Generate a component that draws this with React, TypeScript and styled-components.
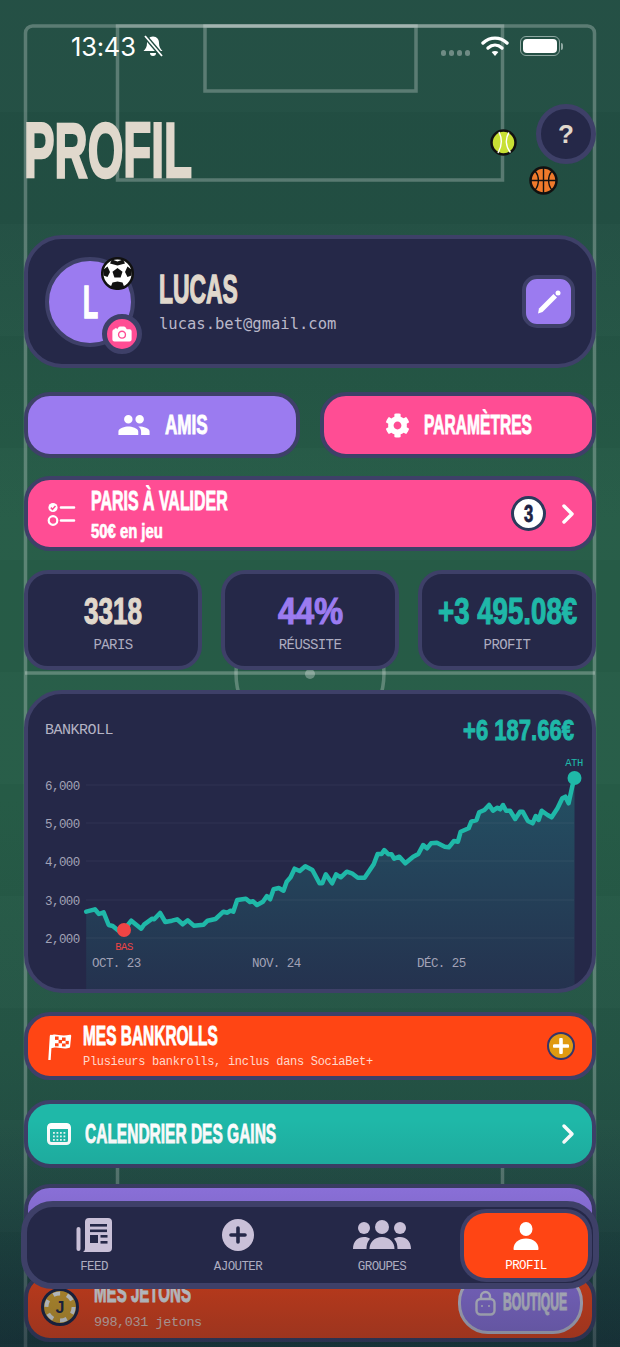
import React, { useLayoutEffect, useRef } from "react";
import styled, { createGlobalStyle } from "styled-components";
import { ChevronRight } from "lucide-react";
import { MdPeople } from "react-icons/md";
import { FaCog } from "react-icons/fa";
import { IoCamera } from "react-icons/io5";

const navy = "#252848";
const edge = "#3e4068";
const cream = "#e0d8cc";
const purple = "#9b7bf0";
const pink = "#ff4d94";
const orange = "#ff4514";
const teal = "#1fb8a8";
const mono = `"Liberation Mono", "DejaVu Sans Mono", monospace`;
const display = `"Liberation Sans Narrow", "Liberation Sans", sans-serif`;

const Global = createGlobalStyle`
  html, body { margin: 0; padding: 0; background: #214c42; }
  * { box-sizing: border-box; }
`;

const Page = styled.div`
  position: relative;
  width: 620px;
  height: 1347px;
  overflow: hidden;
  padding: 33px 24px 0;
  background:
    repeating-linear-gradient(180deg, rgba(255,255,255,.012) 0 112px, rgba(0,0,0,.012) 112px 224px),
    linear-gradient(180deg, #224e43 0, #224f43 220px, #265c47 520px, #265c47 800px, #245445 1050px, #204c43 1200px, #1a3f3e 1347px);
`;
const FieldLines = styled.svg`
  position: absolute;
  left: 0;
  top: 0;
`;
const Content = styled.div`
  position: relative;
  display: flex;
  flex-direction: column;
`;

/* text drawn in the condensed display face, fitted to a measured width */
const DisplayBox = styled.span<{ $w: number; $h: number }>`
  display: block;
  flex: none;
  width: ${(p) => p.$w}px;
  height: ${(p) => p.$h}px;
`;
const DisplayInner = styled.span<{ $size: number; $color: string; $stroke: number }>`
  display: inline-block;
  font-family: ${display};
  font-weight: 700;
  font-size: ${(p) => p.$size}px;
  line-height: ${(p) => p.$size}px;
  color: ${(p) => p.$color};
  -webkit-text-stroke: ${(p) => p.$stroke}px ${(p) => p.$color};
  white-space: nowrap;
  transform-origin: left top;
`;
function Fit({ w, size, color = "#fff", stroke = 0.9, children }: { w: number; size: number; color?: string; stroke?: number; children: React.ReactNode }) {
  const ref = useRef<HTMLSpanElement>(null);
  useLayoutEffect(() => {
    const el = ref.current;
    if (el) el.style.transform = `scaleX(${w / el.offsetWidth})`;
  }, [w]);
  return (
    <DisplayBox $w={w} $h={size}>
      <DisplayInner ref={ref} $size={size} $color={color} $stroke={stroke}>{children}</DisplayInner>
    </DisplayBox>
  );
}

const StatusBar = styled.div`
  display: flex;
  align-items: center;
  height: 26px;
  padding: 0 36px 0 47px;
  color: #fff;
`;
const Clock = styled.span`
  font-family: "Inter", "Liberation Sans", sans-serif;
  font-size: 25.5px;
  font-weight: 400;
  letter-spacing: -0.2px;
  margin-right: 6px;
`;
const StatusRight = styled.div`
  margin-left: auto;
  display: flex;
  align-items: center;
  gap: 11px;
`;
const Dots = styled.div`
  display: flex;
  gap: 2.5px;
  margin-top: 14px;
`;
const Dot = styled.i`
  width: 5.5px;
  height: 5.5px;
  border-radius: 50%;
  background: #6f8b84;
`;
const Battery = styled.div`
  position: relative;
  width: 40px;
  height: 20px;
  border: 1px solid #8fa8a2;
  border-radius: 6px;
  padding: 2px;
  &::before {
    content: "";
    display: block;
    height: 100%;
    border-radius: 4px;
    background: #fff;
  }
  &::after {
    content: "";
    position: absolute;
    right: -4px;
    top: 6px;
    width: 2px;
    height: 7px;
    border-radius: 0 2px 2px 0;
    background: #8fa8a2;
  }
`;

const TitleRow = styled.div`
  position: relative;
  display: flex;
  justify-content: space-between;
  height: 131px;
  margin-top: 45px;
`;
const TitleWrap = styled.div`
  padding-top: 7px;
`;
const HelpButton = styled.div`
  width: 60px;
  height: 60px;
  border-radius: 50%;
  background: ${navy};
  border: 5px solid ${edge};
  display: flex;
  align-items: center;
  justify-content: center;
  color: ${cream};
  font-family: "Liberation Sans", sans-serif;
  font-weight: 700;
  font-size: 26px;
`;
const Ball = styled.svg<{ $x: number; $y: number }>`
  position: absolute;
  left: ${(p) => p.$x}px;
  top: ${(p) => p.$y}px;
`;

const ProfileCard = styled.div`
  height: 133px;
  border-radius: 38px;
  background: ${navy};
  border: 4px solid ${edge};
  display: flex;
  align-items: center;
  padding: 0 17px;
`;
const Avatar = styled.div`
  position: relative;
  flex: none;
  width: 90px;
  height: 90px;
  border-radius: 50%;
  background: ${purple};
  border: 4px solid ${edge};
  display: flex;
  align-items: center;
  justify-content: center;
  margin-right: 24px;
`;
const CameraBadge = styled.div`
  position: absolute;
  left: 53px;
  top: 53px;
  width: 40px;
  height: 40px;
  border-radius: 50%;
  background: ${pink};
  border: 5px solid ${edge};
  display: flex;
  align-items: center;
  justify-content: center;
  color: #fff;
`;
const ProfileText = styled.div`
  flex: 1;
  display: flex;
  flex-direction: column;
  gap: 6px;
  margin-top: -2px;
`;
const Email = styled.div`
  font-family: "DejaVu Sans Mono", monospace;
  font-size: 15.5px;
  color: #b9b7c9;
`;
const EditButton = styled.div`
  width: 53px;
  height: 53px;
  border-radius: 15px;
  background: ${purple};
  border: 4px solid ${edge};
  display: flex;
  align-items: center;
  justify-content: center;
`;

const ActionRow = styled.div`
  display: grid;
  grid-template-columns: 276px 276px;
  gap: 20px;
  margin-top: 24px;
`;
const ActionButton = styled.div<{ $bg: string }>`
  height: 66px;
  border-radius: 26px;
  background: ${(p) => p.$bg};
  border: 4px solid ${edge};
  display: flex;
  align-items: center;
  justify-content: center;
  gap: 14px;
  color: #fff;
`;
const WideCard = styled.div<{ $bg: string; $h: number; $mt: number }>`
  height: ${(p) => p.$h}px;
  margin-top: ${(p) => p.$mt}px;
  border-radius: 26px;
  background: ${(p) => p.$bg};
  border: 4px solid ${edge};
  display: flex;
  align-items: center;
  padding: 0 8px 0 19px;
  color: #fff;
  flex: none;
`;
const CardIcon = styled.div<{ $w: number }>`
  flex: none;
  width: ${(p) => p.$w}px;
  display: flex;
`;
const CardText = styled.div<{ $gap: number; $mt: number }>`
  flex: 1;
  display: flex;
  flex-direction: column;
  gap: ${(p) => p.$gap}px;
  margin-top: ${(p) => p.$mt}px;
`;
const Badge = styled.div`
  width: 35px;
  height: 35px;
  border-radius: 50%;
  background: #fff;
  border: 3px solid #2c3a5c;
  display: flex;
  align-items: center;
  justify-content: center;
  margin-right: 6px;
`;
const CardSub = styled.div`
  font-family: ${mono};
  font-size: 12px;
  letter-spacing: -0.3px;
  color: #ffd9cc;
`;
const PlusBall = styled.div`
  width: 28px;
  height: 28px;
  border-radius: 50%;
  background: #e09a10;
  border: 2.5px solid #34356a;
  display: flex;
  align-items: center;
  justify-content: center;
  margin-right: 9px;
`;

const StatRow = styled.div`
  display: grid;
  grid-template-columns: repeat(3, 178px);
  justify-content: space-between;
  margin-top: 19px;
`;
const StatCard = styled.div`
  height: 100px;
  border-radius: 24px;
  background: ${navy};
  border: 4px solid ${edge};
  display: flex;
  flex-direction: column;
  align-items: center;
  padding-top: 20px;
`;
const StatLabel = styled.div`
  font-family: ${mono};
  font-size: 14px;
  letter-spacing: -0.6px;
  color: #aeadc0;
  margin-top: 7px;
`;

const ChartCard = styled.div`
  height: 303px;
  margin-top: 20px;
  border-radius: 38px;
  background: ${navy};
  border: 4px solid ${edge};
  overflow: hidden;
  flex: none;
`;
const ChartHead = styled.div`
  height: 56px;
  display: flex;
  justify-content: space-between;
  align-items: flex-start;
  padding: 21px 18px 0 17px;
`;
const ChartTitle = styled.div`
  font-family: ${mono};
  font-size: 15px;
  letter-spacing: -0.5px;
  color: #b4b3c4;
  margin-top: 7px;
`;
const ChartSvg = styled.svg`
  display: block;
`;
const AxisText = styled.text`
  font-family: ${mono};
  font-size: 12.5px;
  letter-spacing: -0.55px;
  fill: #a2a2b6;
`;
const MarkText = styled.text<{ $c: string }>`
  font-family: ${mono};
  font-size: 10.5px;
  letter-spacing: -0.5px;
  fill: ${(p) => p.$c};
  text-anchor: middle;
`;

const Spacer = styled.div``;
const JetonCard = styled(WideCard)`
  padding: 0 9px 0 13px;
  gap: 15px;
`;
const JetonText = styled.div`
  flex: 1;
  display: flex;
  flex-direction: column;
  gap: 8px;
  margin-top: -5px;
`;
const JetonSub = styled.div`
  font-family: ${mono};
  font-size: 13.5px;
  letter-spacing: -0.4px;
  color: #ffd9cc;
`;
const Boutique = styled.div`
  width: 125px;
  height: 62px;
  margin-top: -9px;
  border-radius: 30px;
  background: ${purple};
  border: 3px solid #d9d6e8;
  display: flex;
  align-items: center;
  justify-content: center;
  gap: 7px;
`;

const Fade = styled.div`
  position: absolute;
  left: 0;
  right: 0;
  top: 1120px;
  bottom: 0;
  background: linear-gradient(180deg, rgba(18,30,45,0), rgba(18,30,45,.43));
  pointer-events: none;
`;
const Nav = styled.div`
  position: absolute;
  left: 21px;
  top: 1201px;
  width: 578px;
  height: 88px;
  border-radius: 32px;
  background: ${navy};
  border: 6px solid ${edge};
  display: grid;
  grid-template-columns: repeat(4, 134px);
  gap: 10px;
`;
const NavItem = styled.div<{ $active?: boolean }>`
  display: flex;
  flex-direction: column;
  align-items: center;
  margin: ${(p) => (p.$active ? "6px 5px 5px" : "0")};
  padding-top: ${(p) => (p.$active ? "5px" : "10px")};
  border-radius: 22px;
  background: ${(p) => (p.$active ? orange : "transparent")};
  box-shadow: ${(p) => (p.$active ? `0 0 0 4px ${edge}` : "none")};
`;
const NavIcon = styled.div`
  height: 36px;
  display: flex;
  align-items: center;
  justify-content: center;
`;
const NavLabel = styled.div<{ $active?: boolean }>`
  font-family: ${mono};
  font-size: 12.5px;
  letter-spacing: -0.6px;
  margin-top: ${(p) => (p.$active ? "5px" : "7px")};
  color: ${(p) => (p.$active ? "#fff" : "#aeadc0")};
`;

const raw: [number, number][] = [[218,695],[240,688],[250,702],[262,697],[275,735],[285,738],[300,752],[313,750],[332,722],[357,746],[365,733],[385,716],[390,718],[405,699],[418,726],[435,722],[448,718],[462,733],[475,721],[490,737],[515,734],[525,722],[545,717],[565,695],[575,698],[583,692],[590,695],[600,660],[622,656],[632,666],[640,664],[650,675],[665,665],[675,648],[683,658],[692,628],[705,624],[717,632],[725,605],[735,592],[745,566],[758,573],[772,559],[790,570],[808,610],[815,610],[824,583],[840,610],[850,583],[862,592],[877,575],[890,580],[905,593],[922,593],[945,553],[955,522],[965,522],[972,510],[982,523],[990,523],[997,536],[1010,530],[1025,550],[1045,530],[1058,522],[1070,495],[1080,505],[1090,490],[1105,488],[1125,500],[1135,502],[1148,483],[1158,485],[1165,455],[1185,445],[1192,425],[1205,420],[1212,397],[1225,390],[1237,375],[1247,392],[1258,383],[1265,388],[1272,375],[1280,392],[1290,392],[1303,417],[1315,395],[1322,395],[1335,423],[1347,430],[1355,408],[1362,420],[1370,392],[1385,405],[1395,412],[1410,385],[1422,355],[1430,350],[1438,370],[1447,320],[1453,295]];
const OX = 28, OY = 750;
const pts = raw.map(([x, y]) => [x / 2.529 - OX, y / 3 + 680 - OY] as const);
const line = pts.map(([x, y]) => `${x.toFixed(1)},${y.toFixed(1)}`).join(" ");
const area = `M${pts[0][0].toFixed(1)},240 L${line.replace(/ /g, " L")} L${pts[pts.length - 1][0].toFixed(1)},240 Z`;

const iconFill = "#c9c0d8";
const Newspaper = () => (
  <svg width="36" height="36" viewBox="0 0 36 36">
    <rect x="0.5" y="10" width="4" height="24" rx="2" fill={iconFill} />
    <path d="M9 5 a4 4 0 0 1 4-4 h19 a4 4 0 0 1 4 4 v26 a4 4 0 0 1-4 4 H7 c1.5-1 2-2 2-4 Z" fill={iconFill} />
    <rect x="14" y="7" width="17" height="2.6" fill={navy} />
    <rect x="14" y="12.5" width="17" height="2.6" fill={navy} />
    <rect x="14" y="18" width="8" height="8" fill={navy} />
    <rect x="24.5" y="18" width="7" height="2.6" fill={navy} />
    <rect x="24.5" y="24" width="7" height="2.6" fill={navy} />
  </svg>
);
const PlusCircle = () => (
  <svg width="32" height="32" viewBox="0 0 32 32">
    <circle cx="16" cy="16" r="16" fill={iconFill} />
    <path d="M16 9v14M9 16h14" stroke={navy} strokeWidth="3.6" strokeLinecap="round" />
  </svg>
);
const GroupIcon = () => (
  <svg width="58" height="30" viewBox="0 0 58 30" fill={iconFill}>
    <circle cx="11" cy="8" r="6" />
    <circle cx="29" cy="7" r="7" />
    <circle cx="47" cy="8" r="6" />
    <path d="M0 29c0-8 5-12 11-12 2.500 0 4.500.6 6 1.800C14.500 21.500 13.500 25 13.500 29Z" />
    <path d="M16.500 29c0-7 5-12 12.500-12s12.500 5 12.500 12Z" />
    <path d="M58 29c0-8-5-12-11-12-2.500 0-4.500.6-6 1.800 2.500 2.700 3.500 6.200 3.500 10.200Z" />
  </svg>
);
const PersonIcon = () => (
  <svg width="26" height="28" viewBox="0 0 26 28" fill="#fff">
    <ellipse cx="13" cy="7" rx="6.500" ry="7" />
    <path d="M0.500 27c0-6 5-10.500 12.500-10.500S25.500 21 25.500 27c0 .6-.4 1-1 1H1.500c-.6 0-1-.4-1-1Z" />
  </svg>
);
const TaskIcon = () => (
  <svg width="29" height="26" viewBox="0 0 29 26" fill="none">
    <circle cx="6" cy="6.5" r="4.6" fill="#fff" />
    <path d="M3.800 6.600l1.700 1.700 3-3.200" stroke={pink} strokeWidth="1.500" />
    <circle cx="6" cy="19.500" r="4.300" stroke="#fff" strokeWidth="2.200" />
    <path d="M14 6.500h13M14 19.500h13" stroke="#fff" strokeWidth="2.600" strokeLinecap="round" />
  </svg>
);
const PencilIcon = () => (
  <svg width="26" height="26" viewBox="0 0 26 26" fill="#fff">
    <path d="M3 19.500L17.500 5l3.500 3.500L6.500 23 2 24.500Z" />
    <circle cx="22" cy="4" r="2.500" />
  </svg>
);
const FlagIcon = () => (
  <svg width="25" height="28" viewBox="0 0 25 28">
    <path d="M2.500 27.500L4 4" stroke="#fff" strokeWidth="2.400" strokeLinecap="round" />
    <path d="M4 3.500c5-3 8 1.500 19 -.8c1 0 1.300.6 1.200 1.300L23 15.500c-8 3-11-2-19.500 1Z" fill="#fff" />
    <g fill={orange}>
      <rect x="8" y="4.500" width="3.600" height="3.400" />
      <rect x="15" y="5.500" width="3.600" height="3.400" />
      <rect x="11.600" y="7.900" width="3.400" height="3.400" />
      <rect x="18.600" y="8.900" width="3.200" height="3.400" />
      <rect x="8" y="11.300" width="3.600" height="3" />
      <rect x="15" y="11.500" width="3.600" height="3" />
    </g>
  </svg>
);
const CalendarIcon = () => (
  <svg width="24" height="22" viewBox="0 0 24 22">
    <rect x="1.500" y="1.500" width="21" height="19" rx="3" fill={teal} stroke="#fff" strokeWidth="3" />
    <rect x="1" y="1" width="22" height="5" rx="2" fill="#fff" />
    {[9, 12.5, 16].map((y) =>
      [6, 9.500, 13, 16.500].map((x) => <rect key={`${x}-${y}`} x={x} y={y} width="1.800" height="1.800" fill="#fff" opacity="0.9" />)
    )}
  </svg>
);
const BagIcon = () => (
  <svg width="21" height="26" viewBox="0 0 21 26" fill="none" stroke="#e8e6f2" strokeWidth="2.400">
    <rect x="1.500" y="9" width="18" height="15.500" rx="4" />
    <path d="M6 9V6.500a4.500 4.500 0 0 1 9 0V9" />
    <circle cx="7" cy="16" r="1" fill="#e8e6f2" stroke="none" />
    <circle cx="14" cy="16" r="1" fill="#e8e6f2" stroke="none" />
  </svg>
);
const Chip = () => (
  <svg width="38" height="38" viewBox="0 0 38 38">
    <circle cx="19" cy="19" r="17.500" fill="#e8ad2a" stroke="#1c2244" strokeWidth="3" />
    <circle cx="19" cy="19" r="13.600" fill="none" stroke="#fff" strokeWidth="4" strokeDasharray="7 7.200" />
    <text x="19" y="25" textAnchor="middle" fontFamily="Liberation Sans" fontWeight="700" fontSize="16" fill="#1c2244">J</text>
  </svg>
);
const Wifi = () => (
  <svg width="28" height="22" viewBox="0 0 28 22" fill="none" stroke="#fff" strokeWidth="3.400" strokeLinecap="round">
    <path d="M2 8c7-6.500 17-6.500 24 0" />
    <path d="M7 13c4.200-3.800 9.800-3.800 14 0" />
    <path d="M14 21l-3.400-4c2-1.500 4.800-1.500 6.800 0Z" fill="#fff" stroke="none" />
  </svg>
);
const BellOff = () => (
  <svg width="22" height="22" viewBox="0 0 22 22">
    <path d="M11 1.500c-4 0-6 3-6 6.500 0 4-1.500 6-3.500 8h19c-2-2-3.500-4-3.500-8 0-3.500-2-6.500-6-6.500Z" fill="#fff" />
    <path d="M8 18a3 3 0 0 0 6 0Z" fill="#fff" />
    <path d="M3 1l17 20" stroke="#224e43" strokeWidth="4.500" />
    <path d="M3 1l17 20" stroke="#fff" strokeWidth="1.800" />
  </svg>
);

export default function App() {
  return (
    <Page>
      <Global />
      <FieldLines width="620" height="1347" fill="none" stroke="#fff" strokeOpacity="0.25" strokeWidth="3.5">
        <path d="M25.5 1347V33a7 7 0 0 1 7-7H587.500a7 7 0 0 1 7 7V1347" />
        <rect x="117.500" y="26" width="385" height="154" />
        <rect x="205" y="26" width="211" height="65" />
        <path d="M25 673H595" />
        <circle cx="310" cy="673" r="74" />
        <circle cx="310" cy="674" r="5" fill="#fff" fillOpacity="0.3" stroke="none" />
        <path d="M117.500 1168V1190M502.500 1168V1190" />
      </FieldLines>
      <Content>
        <StatusBar>
          <Clock>13:43</Clock>
          <BellOff />
          <StatusRight>
            <Dots><Dot /><Dot /><Dot /><Dot /></Dots>
            <Wifi />
            <Battery />
          </StatusRight>
        </StatusBar>

        <TitleRow>
          <TitleWrap><Fit w={168} size={78} color={cream} stroke={2.6}>PROFIL</Fit></TitleWrap>
          <HelpButton>?</HelpButton>
          <Ball $x={466} $y={25} width="27" height="27" viewBox="0 0 27 27" fill="none">
            <circle cx="13.500" cy="13.500" r="12" fill="#c8e034" stroke="#111" strokeWidth="2.500" />
            <path d="M9 3c3 6 3 14-1 21M19 3.500c-4 6-3.500 14 1.500 20" stroke="#fff" strokeWidth="1.400" />
          </Ball>
          <Ball $x={505} $y={62} width="29" height="29" viewBox="0 0 29 29" fill="none">
            <circle cx="14.500" cy="14.500" r="13" fill="#f07a2b" stroke="#111" strokeWidth="2.500" />
            <path d="M14.500 2v25M2 14.500h25M6 5c4.500 5 4.500 14 0 19M23 5c-4.500 5-4.500 14 0 19" stroke="#111" strokeWidth="1.400" />
          </Ball>
        </TitleRow>

        <ProfileCard>
          <Avatar>
            <Fit w={15} size={46} stroke={1.6}>L</Fit>
            <Ball $x={52} $y={-4} width="33" height="33" viewBox="0 0 33 33">
              <circle cx="16.500" cy="16.500" r="15.300" fill="#fff" stroke="#111" strokeWidth="2.500" />
              <path d="M16.500 11l5 3.700-1.900 5.800h-6.200l-1.900-5.800Z" fill="#111" />
              <path d="M11 2.500l5.500 2 5.500-2 2 4-7.500 2-7.500-2ZM2 13l4.500-3.500 2.500 5.500-2.500 5-4-1.500ZM31 13l-4.500-3.500-2.500 5.500 2.500 5 4-1.500ZM9.500 30.500l2-5 5-1 5 1 2 5-7 1.500Z" fill="#111" />
            </Ball>
            <CameraBadge><IoCamera size={22} /></CameraBadge>
          </Avatar>
          <ProfileText>
            <Fit w={79} size={40} color={cream} stroke={1.4}>LUCAS</Fit>
            <Email>lucas.bet@gmail.com</Email>
          </ProfileText>
          <EditButton><PencilIcon /></EditButton>
        </ProfileCard>

        <ActionRow>
          <ActionButton $bg={purple}><MdPeople size={34} /><Fit w={43} size={27}>AMIS</Fit></ActionButton>
          <ActionButton $bg={pink}><FaCog size={25} /><Fit w={108} size={27}>PARAMÈTRES</Fit></ActionButton>
        </ActionRow>

        <WideCard $bg={pink} $h={75} $mt={18}>
          <CardIcon $w={44}><TaskIcon /></CardIcon>
          <CardText $gap={6} $mt={2}>
            <Fit w={137} size={27}>PARIS À VALIDER</Fit>
            <Fit w={72} size={20} stroke={0.7}>50€ en jeu</Fit>
          </CardText>
          <Badge><Fit w={9} size={24} color="#1c2244" stroke={0.8}>3</Fit></Badge>
          <ChevronRight size={32} strokeWidth={2.6} />
        </WideCard>

        <StatRow>
          <StatCard>
            <Fit w={58} size={36} color={cream} stroke={1.1}>3318</Fit>
            <StatLabel>PARIS</StatLabel>
          </StatCard>
          <StatCard>
            <Fit w={65} size={36} color={purple} stroke={1.1}>44%</Fit>
            <StatLabel>RÉUSSITE</StatLabel>
          </StatCard>
          <StatCard>
            <Fit w={139} size={36} color={teal} stroke={1.1}>+3 495.08€</Fit>
            <StatLabel>PROFIT</StatLabel>
          </StatCard>
        </StatRow>

        <ChartCard>
          <ChartHead>
            <ChartTitle>BANKROLL</ChartTitle>
            <Fit w={111} size={30} color={teal} stroke={1}>+6 187.66€</Fit>
          </ChartHead>
          <ChartSvg width="564" height="240" viewBox="0 0 564 240">
            <defs>
              <linearGradient id="areaFill" x1="0" y1="0" x2="0" y2="1">
                <stop offset="0" stopColor={teal} stopOpacity="0.28" />
                <stop offset="1" stopColor={teal} stopOpacity="0.07" />
              </linearGradient>
            </defs>
            <path d={area} fill="url(#areaFill)" />
            {[785, 823, 861, 900, 938].map((y) => (
              <path key={y} d={`M58 ${y - OY}H546`} stroke="#fff" strokeOpacity="0.06" />
            ))}
            {[["6,000", 785], ["5,000", 823], ["4,000", 861], ["3,000", 900], ["2,000", 938]].map(([t, y]) => (
              <AxisText key={t as string} x="17" y={(y as number) - OY + 5}>{t}</AxisText>
            ))}
            <polyline points={line} fill="none" stroke={teal} strokeWidth="4.500" strokeLinejoin="round" strokeLinecap="round" />
            <circle cx="96" cy="180" r="7" fill="#ef4444" />
            <circle cx="546.500" cy="28" r="7" fill={teal} />
            <MarkText $c="#ef4444" x="96" y="200">BAS</MarkText>
            <MarkText $c={teal} x="546" y="16">ATH</MarkText>
            <AxisText x="64" y="217">OCT. 23</AxisText>
            <AxisText x="224" y="217">NOV. 24</AxisText>
            <AxisText x="389" y="217">DÉC. 25</AxisText>
          </ChartSvg>
        </ChartCard>

        <WideCard $bg={orange} $h={68} $mt={19}>
          <CardIcon $w={36}><FlagIcon /></CardIcon>
          <CardText $gap={5} $mt={0}>
            <Fit w={135} size={27}>MES BANKROLLS</Fit>
            <CardSub>Plusieurs bankrolls, inclus dans SociaBet+</CardSub>
          </CardText>
          <PlusBall>
            <svg width="16" height="16" viewBox="0 0 16 16"><path d="M8 1.500v13M1.500 8h13" stroke="#fff" strokeWidth="3.600" strokeLinecap="round" /></svg>
          </PlusBall>
        </WideCard>

        <WideCard $bg={teal} $h={68} $mt={20}>
          <CardIcon $w={38}><CalendarIcon /></CardIcon>
          <CardText $gap={0} $mt={0}><Fit w={191} size={28}>CALENDRIER DES GAINS</Fit></CardText>
          <ChevronRight size={32} strokeWidth={2.6} />
        </WideCard>

        <WideCard $bg={purple} $h={68} $mt={16}><Spacer /></WideCard>

        <JetonCard $bg={orange} $h={70} $mt={20}>
          <Chip />
          <JetonText>
            <Fit w={97} size={28}>MES JETONS</Fit>
            <JetonSub>998,031 jetons</JetonSub>
          </JetonText>
          <Boutique>
            <BagIcon />
            <Fit w={64} size={23} color="#e8e6f2">BOUTIQUE</Fit>
          </Boutique>
        </JetonCard>
      </Content>
      <Fade />
      <Nav>
        <NavItem><NavIcon><Newspaper /></NavIcon><NavLabel>FEED</NavLabel></NavItem>
        <NavItem><NavIcon><PlusCircle /></NavIcon><NavLabel>AJOUTER</NavLabel></NavItem>
        <NavItem><NavIcon><GroupIcon /></NavIcon><NavLabel>GROUPES</NavLabel></NavItem>
        <NavItem $active><NavIcon><PersonIcon /></NavIcon><NavLabel $active>PROFIL</NavLabel></NavItem>
      </Nav>
    </Page>
  );
}
